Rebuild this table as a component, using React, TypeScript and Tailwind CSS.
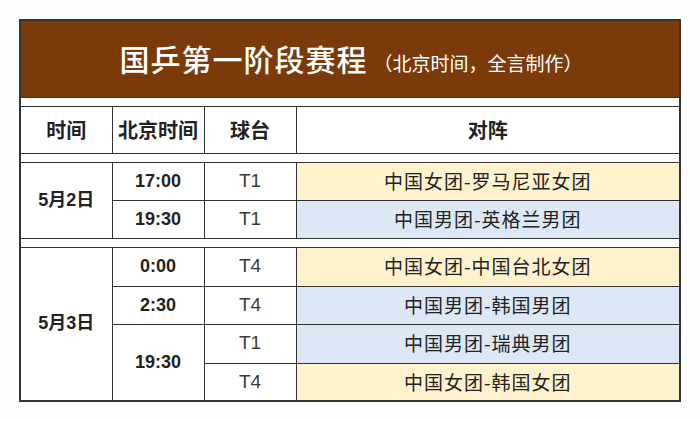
const CJK = "font-['Noto_Sans_CJK_SC','Noto_Sans',sans-serif]";
const NUM = "font-['Liberation_Sans','Noto_Sans_CJK_SC',sans-serif]";

type Match = { table: string; teams: string; tone: "yellow" | "blue" };

const TONE: Record<Match["tone"], string> = {
  yellow: "bg-[#fff2cc]",
  blue: "bg-[#dde8f6]",
};

const cell = "border border-[#333] text-center align-middle p-0";
const timeCell = `${cell} ${NUM} text-[18px] font-bold text-[#222]`;

function GapRow() {
  return (
    <tr className="h-[9px]">
      <td colSpan={4} className="border border-[#333] bg-white p-0" />
    </tr>
  );
}

function MatchCell({ m }: { m: Match }) {
  return (
    <td className={`${cell} ${TONE[m.tone]} ${CJK} text-[19px] text-[#222] tracking-[1px]`}>
      {m.teams}
    </td>
  );
}

function TableCell({ m }: { m: Match }) {
  return <td className={`${cell} ${NUM} text-[19px] text-[#3a3a3a]`}>{m.table}</td>;
}

export default function App() {
  const day2: Match[] = [
    { table: "T1", teams: "中国女团-罗马尼亚女团", tone: "yellow" },
    { table: "T1", teams: "中国男团-英格兰男团", tone: "blue" },
  ];
  const day3: Match[] = [
    { table: "T4", teams: "中国女团-中国台北女团", tone: "yellow" },
    { table: "T4", teams: "中国男团-韩国男团", tone: "blue" },
    { table: "T1", teams: "中国男团-瑞典男团", tone: "blue" },
    { table: "T4", teams: "中国女团-韩国女团", tone: "yellow" },
  ];

  return (
    <div className="h-[421px] w-[700px] bg-[#fdfdfd] pl-[19px] pt-[19px]">
      <table className="w-[662px] table-fixed border-collapse border-2 border-[#333] bg-white">
        <colgroup>
          <col className="w-[92px]" />
          <col className="w-[92px]" />
          <col className="w-[92px]" />
          <col />
        </colgroup>
        <tbody>
          <tr className="h-[77px]">
            <td colSpan={4} className="border border-[#333] bg-[#7a3a0a] p-0 pl-[2px] text-center text-white">
              <span className={`${CJK} text-[30px] font-medium tracking-[1px]`}>国乒第一阶段赛程</span>
              <span className={`${CJK} ml-[6px] text-[19px]`}>（北京时间，全言制作）</span>
            </td>
          </tr>
          <GapRow />
          <tr className={`h-[47px] ${CJK} text-[20px] font-bold text-[#222]`}>
            <td className={cell}>时间</td>
            <td className={cell}>北京时间</td>
            <td className={cell}>球台</td>
            <td className={cell}>对阵</td>
          </tr>
          <GapRow />
          <tr className="h-[38px]">
            <td rowSpan={2} className={timeCell}>5月2日</td>
            <td className={timeCell}>17:00</td>
            <TableCell m={day2[0]} />
            <MatchCell m={day2[0]} />
          </tr>
          <tr className="h-[38px]">
            <td className={timeCell}>19:30</td>
            <TableCell m={day2[1]} />
            <MatchCell m={day2[1]} />
          </tr>
          <GapRow />
          <tr className="h-[39px]">
            <td rowSpan={4} className={timeCell}>5月3日</td>
            <td className={timeCell}>0:00</td>
            <TableCell m={day3[0]} />
            <MatchCell m={day3[0]} />
          </tr>
          <tr className="h-[38px]">
            <td className={timeCell}>2:30</td>
            <TableCell m={day3[1]} />
            <MatchCell m={day3[1]} />
          </tr>
          <tr className="h-[39px]">
            <td rowSpan={2} className={timeCell}>19:30</td>
            <TableCell m={day3[2]} />
            <MatchCell m={day3[2]} />
          </tr>
          <tr className="h-[38px]">
            <TableCell m={day3[3]} />
            <MatchCell m={day3[3]} />
          </tr>
        </tbody>
      </table>
    </div>
  );
}
